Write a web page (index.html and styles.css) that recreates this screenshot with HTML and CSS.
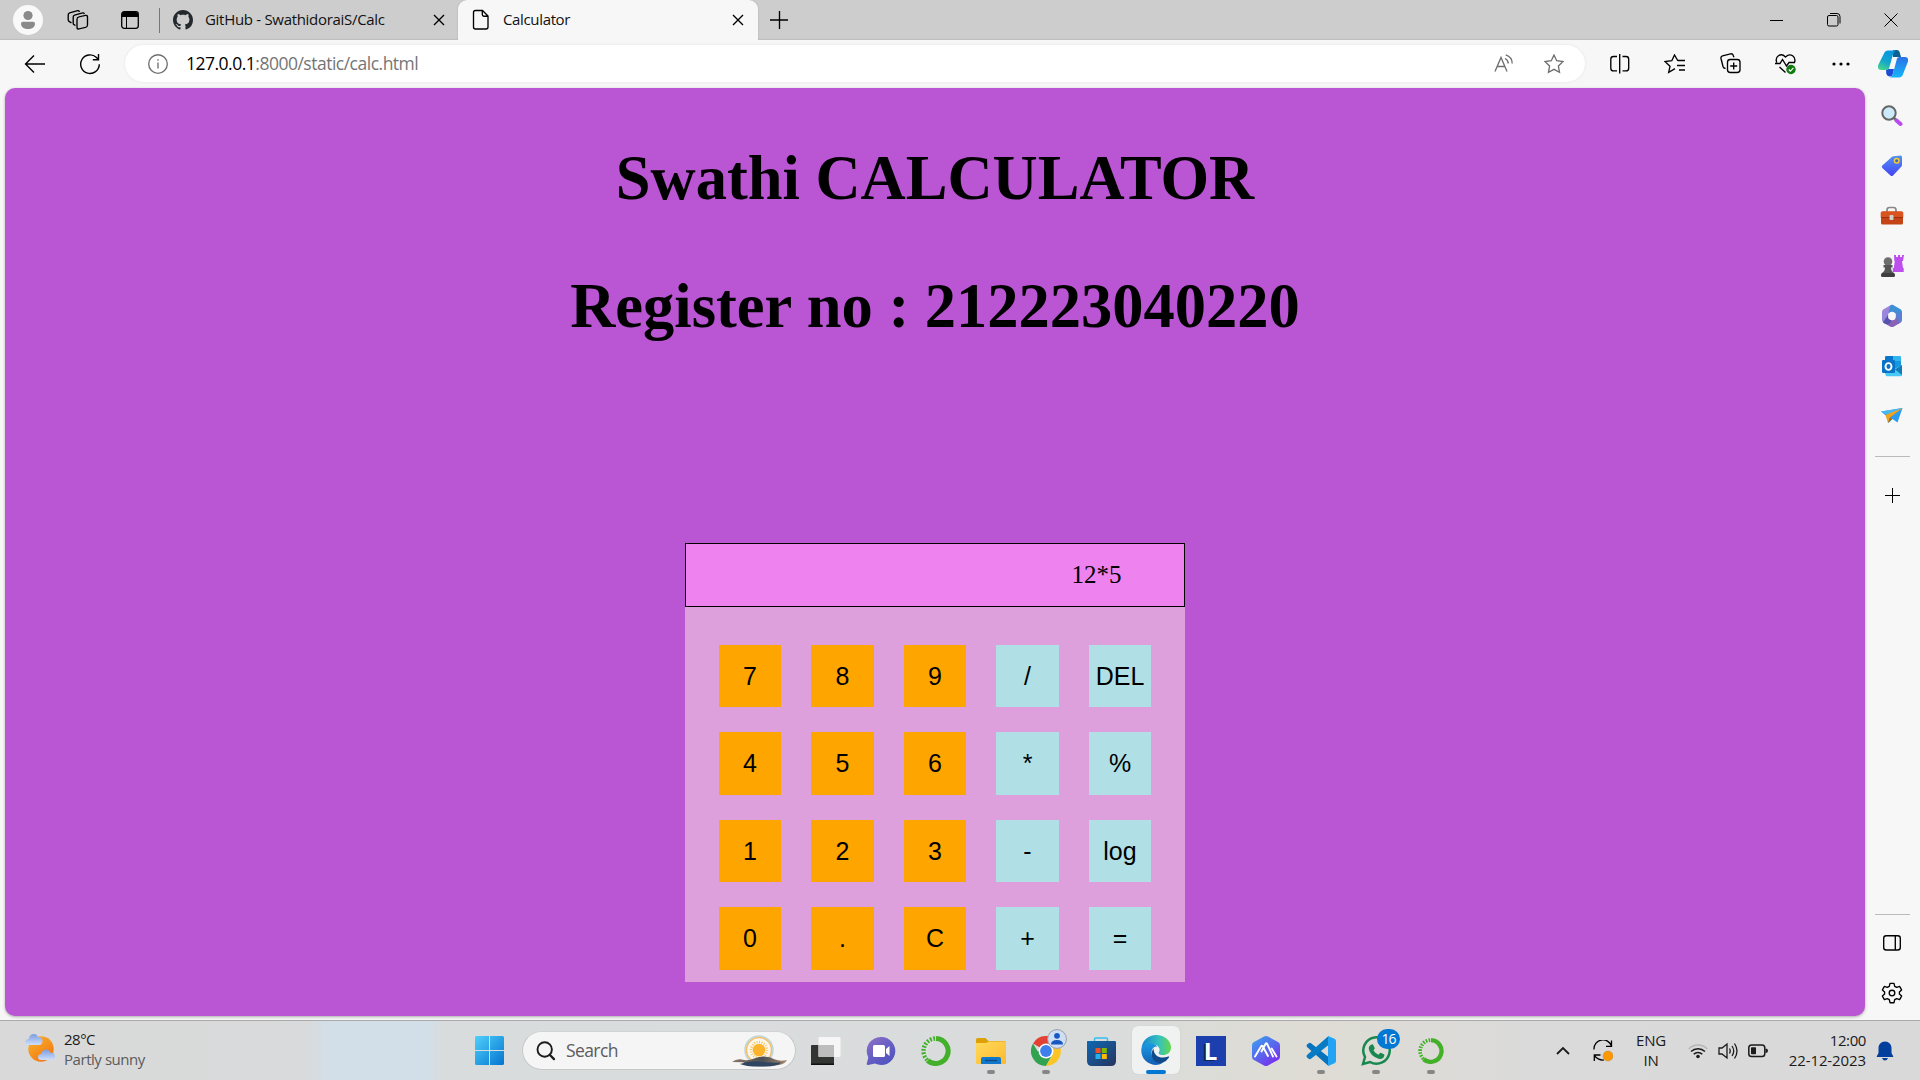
FILE: index.html
```html
<!DOCTYPE html>
<html lang="en">
<head>
<meta charset="utf-8">
<title>Calculator</title>
<link rel="stylesheet" href="styles.css">
</head>
<body>
<header class="tabbar">
  <div class="cell profile"><svg width="30" height="30" viewBox="0 0 30 30"><circle cx="15" cy="15" r="15" fill="#f9f9f9"/><circle cx="15" cy="10.5" r="4.6" fill="#8a8a8a"/><path d="M8 18.5q0-1.7 1.7-1.7h10.6q1.7 0 1.7 1.7c0 3.600-3 5.600-7 5.600s-7-2-7-5.600z" fill="#8a8a8a"/></svg></div>
  <div class="cell w50"><svg class="ln" width="22" height="20" viewBox="0 0 22 20"><rect x="10" y="6.500" width="10.500" height="12" rx="2" transform="matrix(1 -.22 0 1 0 3)"/><path d="M8.500 15.500l-1.500-.8q-.8-.5-.8-1.500V7q0-1.500 1.400-1.900l8-2.200q1.500-.3 1.700 1.300M4.500 12.800l-2.500-1.500q-.8-.5-.8-1.500V4.800q0-1.500 1.400-1.900l8-2.200q1.500-.3 1.700 1.300"/></svg></div>
  <div class="cell tabmenu"><svg width="18" height="18" viewBox="0 0 18 18"><rect x=".7" y=".7" width="16.600" height="16.600" rx="2.500" fill="none" stroke="#000" stroke-width="1.300"/><path d="M1 6V3q0-2 2-2h12q2 0 2 2v3z"/><path d="M5.500 6v11" stroke="#000"/></svg></div>
  <span class="tabrule"></span>
  <div class="tab idle">
    <svg width="20" height="20" viewBox="0 0 16 16" fill="#24292f"><path d="M8 0C3.580 0 0 3.580 0 8c0 3.540 2.290 6.530 5.470 7.590.4.070.55-.17.55-.38 0-.19-.01-.82-.01-1.490-2.010.37-2.530-.49-2.690-.94-.09-.23-.48-.94-.82-1.130-.28-.15-.68-.52-.01-.53.63-.01 1.080.58 1.230.82.72 1.210 1.870.87 2.330.66.070-.52.28-.87.51-1.070-1.780-.2-3.640-.89-3.640-3.950 0-.87.31-1.590.82-2.150-.08-.2-.36-1.020.08-2.120 0 0 .67-.21 2.200.82.64-.18 1.320-.27 2-.27s1.360.09 2 .27c1.530-1.040 2.200-.82 2.200-.82.44 1.100.16 1.920.08 2.120.51.56.82 1.270.82 2.150 0 3.070-1.870 3.750-3.650 3.950.29.25.54.73.54 1.480 0 1.070-.01 1.930-.01 2.200 0 .21.15.46.55.38A8.010 8.010 0 0 0 16 8c0-4.420-3.580-8-8-8z"/></svg>
    <span class="tabname">GitHub - SwathidoraiS/Calc</span>
    <svg class="ln" width="12" height="12" viewBox="0 0 12 12"><path d="M1 1l10 10M11 1L1 11"/></svg>
  </div>
  <div class="tab active">
    <svg class="ln" width="18" height="22" viewBox="0 0 18 22"><path d="M3.500 1.500h7l5.500 5.500v11q0 2-2 2H3.500q-2 0-2-2v-14.500q0-2 2-2zM10.300 1.500V5.500q0 1.700 1.700 1.700h4"/></svg>
    <span class="tabname calc">Calculator</span>
    <svg class="ln" width="12" height="12" viewBox="0 0 12 12"><path d="M1 1l10 10M11 1L1 11"/></svg>
  </div>
  <div class="cell newtab"><svg class="ln" width="18" height="18" viewBox="0 0 18 18"><path d="M0 9h18M9.500 0v18"/></svg></div>
  <div class="winbtns">
    <div class="cell w57"><svg class="ln thin" width="14" height="14" viewBox="0 0 14 14"><path d="M0 7.500h13"/></svg></div>
    <div class="cell w57"><svg class="ln thin" width="14" height="14" viewBox="0 0 14 14"><rect x=".5" y="2.500" width="10.500" height="10.500" rx="1.500"/><path d="M3 .5h7q3 0 3 3v7"/></svg></div>
    <div class="cell w57"><svg class="ln thin" width="14" height="14" viewBox="0 0 14 14"><path d="M.5.500l13 13M13.500.500l-13 13"/></svg></div>
  </div>
</header>

<nav class="toolbar">
  <div class="cell back"><svg class="ln" width="22" height="20" viewBox="0 0 22 20"><path d="M10 1.500L1.500 10l8.500 8.500M1.500 10H21"/></svg></div>
  <div class="cell reload"><svg class="ln" width="22" height="22" viewBox="0 0 22 22"><path d="M20.300 11.300A9.300 9.300 0 1 1 17.500 4.500L19.300 6.500M19.500 1v5.700h-5.700" stroke-width="1.400"/></svg></div>
  <div class="address">
    <svg class="ln gray" width="20" height="20" viewBox="0 0 20 20"><circle cx="10" cy="10" r="9.300"/><path d="M10 8.500v6M10 5.300v1.500"/></svg>
    <span class="url"><b>127.0.0.1</b>:8000/static/calc.html</span>
    <svg class="ln gray aloud" width="20" height="19" viewBox="0 0 20 19"><path d="M1 17.500L7 3.500l6 14M3.300 12.500h7.500M11 4.500q3.200 1.500 3.200 5M11.700.900q6.500 2.200 6.500 8.500"/></svg>
    <svg class="ln gray" width="20" height="20" viewBox="0 0 20 20"><path d="M10 1l2.700 5.700 6.300.9-4.600 4.400 1.100 6.300L10 15.300l-5.500 3 1.100-6.300L1 7.600l6.300-.9z"/></svg>
  </div>
  <div class="tools">
    <div class="cell"><svg class="ln" width="20" height="20" viewBox="0 0 20 20"><path d="M7 2.500H3.500Q.8 2.500.8 5.200v9q0 2.700 2.700 2.700H7M12.500 2.500H16q2.700 0 2.700 2.700v9q0 2.700-2.700 2.700h-3.500M9.700 0v19.500"/></svg></div>
    <div class="cell"><svg class="ln" width="21" height="20" viewBox="0 0 21 20"><path d="M14 7L10.500 1 7.800 6.700l-6.800.9L6 12.300l-1.300 6L11 14.700M14 6.500h7M13 11.500h8M15 16h6"/></svg></div>
    <div class="cell"><svg class="ln" width="21" height="21" viewBox="0 0 21 21"><rect x="7.500" y="6.500" width="12.500" height="13" rx="2.800"/><path d="M13.700 9.500v7M10.200 13h7M5.500 15.500q-2-.2-2.500-2L1 5.500Q.6 3.500 2.500 2.800l8-2q2.200-.3 2.800 1.700l.6 1.700"/></svg></div>
    <div class="cell"><svg class="ln" width="22" height="22" viewBox="0 0 22 22"><path d="M1.800 9.500C-.5 4 5.500-1 10.500 4 15.500-1 21.500 4 19.500 9.500M0 10.500h5l2.500-4 4 6.500 2.500-3.500h6M4.500 14l6 5.500"/><circle cx="16" cy="16.500" r="4.700" fill="#107c10" stroke="none"/><path d="M13.800 16.500l1.600 1.700 3-3.300" stroke="#fff" stroke-width="1.100"/></svg></div>
    <div class="cell"><svg width="18" height="6" viewBox="0 0 18 6"><circle cx="2" cy="3" r="1.600"/><circle cx="9" cy="3" r="1.600"/><circle cx="16" cy="3" r="1.600"/></svg></div>
  </div>
  <div class="cell copilot"><svg width="30" height="28" viewBox="0 0 30 28">
    <defs><linearGradient id="c1" x1="0" y1="1" x2=".4" y2="0"><stop offset="0" stop-color="#52dd84"/><stop offset=".5" stop-color="#15a6cc"/><stop offset="1" stop-color="#0797de"/></linearGradient><linearGradient id="c2" x1="0" y1="0" x2="0" y2="1"><stop offset="0" stop-color="#2b70e6"/><stop offset="1" stop-color="#15b6fb"/></linearGradient></defs>
    <path d="M15 0h4q2 0 2.600 2l1.400 5h-8z" fill="#0c6194"/><path d="M8 19h8l-1.500 6q-.6 1.500-2.500 1.500-3 0-3.700-3z" fill="#1c4bd8"/>
    <path d="M6.500 2.500Q7.600.500 10 .500h9q-3 .2-4 4l-4 14q-.6 1.500-2.500 1.500H3q-4 0-2.800-5z" fill="url(#c1)"/>
    <path d="M24.500 25.500q-1.100 2-3.500 2H11q3-.2 4-4l4-15q.6-1.500 2.500-1.500H27q4 0 2.800 5z" fill="url(#c2)"/></svg></div>
</nav>

<div class="middle">
  <main class="page">
    <h1>Swathi CALCULATOR</h1>
    <h1>Register no : 212223040220</h1>
    <section class="calculator">
      <div class="display">12*5</div>
      <div class="keys">
        <button>7</button><button>8</button><button>9</button><button class="op">/</button><button class="op">DEL</button>
        <button>4</button><button>5</button><button>6</button><button class="op">*</button><button class="op">%</button>
        <button>1</button><button>2</button><button>3</button><button class="op">-</button><button class="op">log</button>
        <button>0</button><button>.</button><button>C</button><button class="op">+</button><button class="op">=</button>
      </div>
    </section>
  </main>
  <aside class="sidebar">
    <div class="item"><svg width="22" height="22" viewBox="0 0 22 22"><path d="M13 13l2 2" stroke="#666" stroke-width="2.500"/><path d="M15.500 15.500l4 3.500" stroke="#b94af0" stroke-width="4" stroke-linecap="round"/><circle cx="8" cy="8" r="6.700" fill="#cdeafa" stroke="#666" stroke-width="2"/></svg></div>
    <div class="item"><svg width="22" height="22" viewBox="0 0 22 22"><defs><linearGradient id="tg" x1="0" y1="0" x2="0" y2="1"><stop offset="0" stop-color="#4f94f4"/><stop offset="1" stop-color="#4742f5"/></linearGradient></defs><path d="M12.500 1.300l7-.8q1.500 0 1.500 1.500v8q0 1-1 2l-8 8.500q-1.200 1-2.500 0L1.300 13q-1-1.300 0-2.500l9.500-8.500q.8-.7 1.700-.7z" fill="url(#tg)"/><circle cx="15.700" cy="5.700" r="2.300" fill="#3469cf" stroke="#fbc934" stroke-width="1.500"/></svg></div>
    <div class="item"><svg width="24" height="20" viewBox="0 0 24 20"><path d="M7 6V4q0-2.500 2.500-2.500h4Q16 1.500 16 4v2" fill="none" stroke="#878787" stroke-width="1.700"/><rect x="1" y="5.500" width="22" height="13" rx="1.500" fill="#c44417"/><path d="M.7 7q0-1.500 1.500-1.500h19.600q1.500 0 1.500 1.500v4.500H.7z" fill="#d9541e"/><path d="M1 11.500h22" stroke="#98310e"/><rect x="9.500" y="9" width="4" height="5" rx="1" fill="#d0d0d0"/></svg></div>
    <div class="item"><svg width="24" height="24" viewBox="0 0 24 24"><path d="M14 1h2v2h2V1h2v2h2V1h2l-1 6h-1l1 7h.7v4H12.800v-4h1l1-7h-.5z" fill="#bd50ed"/><circle cx="8" cy="7.500" r="4.300" fill="#6d6d6d"/><path d="M3.500 11h9v2.500H11q0 3.500 3 5.500v2H2v-2q3-2 3-5.500H3.500z" fill="#555"/><rect x="1" y="19" width="14" height="4" rx="1.500" fill="#3f3f3f"/></svg></div>
    <div class="item"><svg width="22" height="24" viewBox="0 0 22 24"><path d="M10 1L2.500 5.300Q1 6.200 1 8v8q0 1.500 1.200 2.400L7.500 14V9.500L15 4l-3-3q-1-.5-2 0z" fill="#9a86dc"/><path d="M7.500 9.500L9 2q2-2 4-.5l6.500 3.800Q21 6.200 21 8v4l-6.500-2.500L11 7.500z" fill="#3f8fd6"/><path d="M21 8v8q0 1.800-1.500 2.700L17 20l-3-5.500.5-5z" fill="#5a7fd4"/><path d="M7.500 14.500l3.500 2 5-2 2.500 4.800L13 22.500q-2 1-4 0l-6.500-3.800-.6-.6z" fill="#8961b7"/><path d="M2 18.200l5.500-8v4.500l3 2L8 20q-3.500 1-6-1.800z" fill="#5552ad"/><circle cx="11" cy="12" r="3.900" fill="#f7f7f7"/></svg></div>
    <div class="item"><svg width="22" height="22" viewBox="0 0 22 22"><rect x="4" y="1" width="16" height="18" rx="1.300" fill="#32b5ec"/><path d="M4 2.500Q4 1 5.500 1H12v5H4z" fill="#0877c9"/><path d="M12 6h8v6l-5 4-3-2z" fill="#1698dc"/><path d="M5 14l7 .5L21 10v10q0 1.300-1.300 1.300H6q-1.500 0-1.500-1.500z" fill="#47c9f4"/><path d="M14 14.500l7 5.500V10z" fill="#147bb9"/><rect x="1" y="5" width="13" height="13" rx="1.300" fill="#0872c9"/><ellipse cx="7.500" cy="11.500" rx="3" ry="3.400" fill="none" stroke="#fff" stroke-width="1.900"/></svg></div>
    <div class="item"><svg width="22" height="18" viewBox="0 0 22 18"><path d="M0 4.500L21.500 1l-5 14.500-5-3.500-4 4-2-7z" fill="#299cf0"/><path d="M0 4.500L21.500 1 8 9z" fill="#45b9f4"/><path d="M4.500 8L21.500 1 9 10.500 7 16z" fill="#f2a21b"/><path d="M9 10.500L7 16l4-4z" fill="#a8660b"/></svg></div>
    <span class="rule"></span>
    <div class="item add"><svg class="ln thin" width="15" height="15" viewBox="0 0 15 15"><path d="M0 7.500h15M7.500 0v15"/></svg></div>
    <div class="lower">
      <span class="rule"></span>
      <div class="item panel"><svg class="ln" width="18" height="16" viewBox="0 0 18 16"><rect x=".7" y=".7" width="16.600" height="14.300" rx="2.500"/><path d="M12.300.700v14.300"/></svg></div>
      <div class="item gear"><svg class="ln" width="22" height="22" viewBox="0 0 22 22"><circle cx="11" cy="11" r="2.800"/><path d="M9 1.300h4l.7 3 2 1.100 2.900-1 2 3.500-2.200 2.100v2l2.200 2.100-2 3.500-2.900-1-2 1.100-.7 3H9l-.7-3-2-1.100-2.900 1-2-3.500L3.600 12v-2L1.400 7.900l2-3.500 2.900 1 2-1.100z" stroke-linejoin="round"/></svg></div>
    </div>
  </aside>
</div>

<footer class="taskbar">
  <div class="weather">
    <svg width="32" height="30" viewBox="0 0 32 30"><defs><linearGradient id="sun" x1="0" y1="0" x2=".7" y2="1"><stop offset="0" stop-color="#f8b62c"/><stop offset="1" stop-color="#f37612"/></linearGradient><linearGradient id="cl" x1="0" y1="0" x2="0" y2="1"><stop offset="0" stop-color="#7a9ce0"/><stop offset="1" stop-color="#cfdffb"/></linearGradient></defs><circle cx="16" cy="16" r="12.700" fill="url(#sun)"/><path d="M3.500 12q-3 0-3-3t3.200-3Q4.700 1 9 1q3 0 4 3 4-.3 4.500 3.500 0 4.500-3.500 4.500z" fill="url(#cl)"/><path d="M16 27q-3 0-3-3t3.200-3q1-4.500 5-4.500 3 0 4 3 4.500 0 4.800 3.700 0 3.800-3.500 3.800z" fill="url(#cl)"/></svg>
    <div class="wtext"><span class="temp">28°C</span><span class="cond">Partly sunny</span></div>
  </div>
  <div class="start"><svg width="30" height="30" viewBox="0 0 30 30"><defs><linearGradient id="win" gradientUnits="userSpaceOnUse" x1="0" y1="0" x2="29" y2="29"><stop offset="0" stop-color="#4fd0fb"/><stop offset="1" stop-color="#0474d0"/></linearGradient></defs><path d="M1.500 0H14v14H0V1.500Q0 0 1.500 0zM15 0h12.500Q29 0 29 1.500V14H15zM0 15h14v14H1.500Q0 29 0 27.500zM15 15h14v12.500q0 1.500-1.500 1.500H15z" fill="url(#win)"/></svg></div>
  <div class="search">
    <svg width="20" height="20" viewBox="0 0 20 20" fill="none" stroke="#1d1d1d"><circle cx="8.700" cy="8.500" r="7.200" stroke-width="1.900"/><path d="M13.700 13.800l4.300 4.300" stroke-width="2.300" stroke-linecap="round"/></svg>
    <span>Search</span>
    <svg width="56" height="34" viewBox="0 0 56 34"><defs><linearGradient id="hill" x1="0" y1="0" x2="1" y2="0"><stop offset="0" stop-color="#8f7565"/><stop offset=".55" stop-color="#4b5056"/><stop offset="1" stop-color="#a88a6c"/></linearGradient></defs><circle cx="27" cy="16" r="14" fill="#f7f4ed" stroke="#bad8de" stroke-width="1.500"/><circle cx="27" cy="16" r="12.500" fill="#faf7ef" stroke="#f4bd69" stroke-width="1.500"/><circle cx="27" cy="16" r="8" fill="none" stroke="#f6c45c" stroke-width="2.500" stroke-dasharray="1 1.500"/><circle cx="27" cy="16" r="6.300" fill="#fdb42d"/><path d="M0 28q5-4 12-2 5 1 10-1.500 5-2 10-2 6 0 11 3 5 2 12 .5-2 4-8 5-8 1.500-20 1.200-12-.2-16-4z" fill="url(#hill)"/><path d="M8 30q12-4 22-2 10 1 19 .5-3 3.700-16 4-19 .5-25-2.500z" fill="#304560"/></svg>
  </div>
  <div class="apps">
    <div class="app"><svg width="30" height="30" viewBox="0 0 30 30"><rect x="0" y="9" width="23" height="20" rx="1" fill="#333532"/><path d="M0 27.500h23v1q0 .5-.5.500H.5q-.5 0-.5-.5z" fill="#101010"/><rect x="7.500" y="1" width="22" height="20" rx="1" fill="#f6f6f6"/><rect x="7.500" y="9" width="15.500" height="12" fill="#bdbdbd"/></svg></div>
    <div class="app"><svg width="30" height="30" viewBox="0 0 30 30"><defs><linearGradient id="chat" x1="0" y1="0" x2=".7" y2="1"><stop offset="0" stop-color="#9272c2"/><stop offset=".5" stop-color="#6b60c5"/><stop offset="1" stop-color="#4f54be"/></linearGradient></defs><path d="M15 1a14 14 0 1 1-6 26.500L2 29Q.5 29.300.8 27.500l1.500-6A14 14 0 0 1 15 1z" fill="url(#chat)"/><rect x="7" y="9" width="12" height="12" rx="1.500" fill="#fff"/><path d="M20 13l3.500-3v10L20 17z" fill="#fff"/></svg></div>
    <div class="app"><svg width="30" height="30" viewBox="0 0 30 30" fill="none" stroke="#43b02a"><path d="M15 2.500a12.500 12.500 0 1 1-8.500 22" stroke-width="5"/><path d="M14 2.500A12.500 12.500 0 0 0 7 24.500" stroke-width="4.500" stroke-dasharray="1.800 1.500"/><path d="M12 6A10 10 0 0 0 8 22" stroke-width="1.500" stroke-dasharray="2 1" stroke="#dfe5de"/></svg></div>
    <div class="app run"><svg width="30" height="30" viewBox="0 0 30 30"><defs><linearGradient id="fd" x1="0" y1="0" x2="1" y2="1"><stop offset="0" stop-color="#ffd95a"/><stop offset="1" stop-color="#fcba30"/></linearGradient></defs><path d="M0 3.500Q0 2 1.500 2h8l3 3H28q2 0 2 2v3H0z" fill="#dda007"/><path d="M0 7h10l3-1.500h15.500Q30 5.500 30 7v20q0 1-1 1H1q-1 0-1-1z" fill="url(#fd)"/><path d="M5 28v-5q0-2 2-2h16q2 0 2 2v5z" fill="#1177cb"/><path d="M9 24.500h12" stroke="#0a4a86" stroke-width="1.400"/></svg></div>
    <div class="app run"><svg width="30" height="30" viewBox="0 0 30 30"><path d="M15 15L2 7.500A15 15 0 0 1 28 7.500z" fill="#e34133"/><path d="M15 15H6.500L2 7.500A15 15 0 0 0 15 30l6-11z" fill="#31a350"/><path d="M15 8h13.200A15 15 0 0 1 15 30l6.500-11z" fill="#fcc525"/><circle cx="15" cy="15" r="7.500" fill="#fff"/><circle cx="15" cy="15" r="5.900" fill="#3d80ec"/></svg><svg class="badge person" width="20" height="20" viewBox="0 0 20 20"><circle cx="10" cy="10" r="9.400" fill="#cfdef7" stroke="#9a9da2"/><circle cx="10" cy="6.800" r="2.900" fill="#1757c0"/><path d="M4 15.500q0-4.500 6-4.500t6 4.500z" fill="#1757c0"/></svg></div>
    <div class="app"><svg width="30" height="30" viewBox="0 0 30 30"><defs><linearGradient id="st" x1="0" y1="0" x2="1" y2="1"><stop offset="0" stop-color="#0e68b4"/><stop offset="1" stop-color="#27355d"/></linearGradient></defs><path d="M8.500 7V3Q8.500 2 9.500 2h11q1 0 1 1v4" fill="none" stroke="#32bff1" stroke-width="1.500"/><path d="M1.500 5h27Q30 5 30 6v19q0 5-5 5H6q-5 0-5-5V6q0-1 .5-1z" fill="url(#st)"/><path d="M9.500 12h5v5h-5z" fill="#f25022"/><path d="M15.800 12h5v5h-5z" fill="#7fba00"/><path d="M9.500 18h5v5h-5z" fill="#28afea"/><path d="M15.800 18h5v5h-5z" fill="#ffb900"/></svg></div>
    <div class="app run current"><svg width="30" height="30" viewBox="0 0 30 30"><defs><linearGradient id="e1" x1="0" y1=".5" x2="1" y2=".5"><stop offset="0" stop-color="#1683d3"/><stop offset=".6" stop-color="#36c2bd"/><stop offset="1" stop-color="#65d84b"/></linearGradient><linearGradient id="e2" x1="0" y1="0" x2="0" y2="1"><stop offset="0" stop-color="#1a99e3"/><stop offset="1" stop-color="#115fb4"/></linearGradient></defs><path d="M.5 13C1.500 5 8 0 15 0c9 0 15 6 15 12.500 0 5-4 7.500-8 7.500-4 0-5-1.500-4-3 2-3-1-7.500-6-7.500C6 9.500 2 11 .5 13z" fill="url(#e1)"/><path d="M.5 13c1.500-3 5.500-5 10-4.500 3 .3 5 2 5.500 3.500-3-1-5.500 2-5.500 6 0 6 5.500 10.500 11 10-2 1.300-4.500 2-7 2C5.500 29.500-1 22 .5 13z" fill="url(#e2)"/><path d="M12.500 13.500C8 20 12 29.500 21 28q4.500-1.500 7-5.500.6-1.300-.8-1C21 24 13 22.500 12.500 13.500z" fill="#114a8b"/></svg></div>
    <div class="app"><div class="lapp">L</div></div>
    <div class="app"><svg width="30" height="30" viewBox="0 0 30 30"><defs><linearGradient id="hex" x1="0" y1="0" x2=".7" y2="1"><stop offset="0" stop-color="#38a6f1"/><stop offset=".6" stop-color="#5b62ec"/><stop offset="1" stop-color="#7a2ef0"/></linearGradient></defs><path d="M13 .600q2-1.200 4 0l10 5.500q2 1 2 3.400v11q0 2.400-2 3.400l-10 5.500q-2 1.200-4 0L3 23.900q-2-1-2-3.400v-11q0-2.400 2-3.400z" fill="url(#hex)"/><path d="M4 20.500l6-10q1-1.500 1.800 0L17 20M10.500 15.500L14.500 8q.8-1.500 1.700 0L22 20.500M20.700 12.500l4.800 8" fill="none" stroke="#fff" stroke-width="1.900" stroke-linecap="round"/></svg></div>
    <div class="app run"><svg width="30" height="30" viewBox="0 0 30 30"><path d="M1 8.500l2-1.500q1-.6 2 .2L22.500 21v9L1 11q-1-1.200 0-2.500z" fill="#0873bd"/><path d="M1 21.500L3 23q1 .6 2-.2L22.500 9V0L1 19q-1 1.200 0 2.500z" fill="#087bc5"/><path d="M22 0l6.500 2.800Q30 3.500 30 5v20q0 1.500-1.500 2.200L22 30z" fill="#22a3f3"/></svg></div>
    <div class="app run"><svg width="30" height="30" viewBox="0 0 30 30"><path d="M2 28l2-7A13.200 13.200 0 1 1 9 26z" fill="none" stroke="#18884f" stroke-width="2.500"/><path d="M10.500 8.500q1.200-.8 1.800.4l1.400 3q.3.700-1.300 2.300 2 3.500 5.200 4.500 1.500-2.200 2.200-1.900l3 1.500q.8.400.5 1.500-1 3.500-5 3.200-9-2.500-10.500-10Q7.500 10 10.500 8.500z" fill="#18884f"/></svg><span class="badge count">16</span></div>
    <div class="app run"><svg width="26" height="26" viewBox="0 0 30 30" fill="none" stroke="#43b02a"><path d="M15 2.500a12.500 12.500 0 1 1-8.500 22" stroke-width="5"/><path d="M14 2.500A12.500 12.500 0 0 0 7 24.500" stroke-width="4.500" stroke-dasharray="1.800 1.500"/><path d="M12 6A10 10 0 0 0 8 22" stroke-width="1.500" stroke-dasharray="2 1" stroke="#e2e3dd"/></svg></div>
  </div>
  <div class="tray">
    <div class="cell chev"><svg width="14" height="10" viewBox="0 0 14 10" fill="none" stroke="#1b1b1b" stroke-width="1.800"><path d="M1 8l6-6 6 6"/></svg></div>
    <div class="cell sync"><svg class="ln" width="20" height="22" viewBox="0 0 20 22"><path d="M1 9.500A9 9 0 0 1 18.500 6M18.500.500V6.300h-5.500M7.500 15H1.300V21M1.300 15.500q4 5 9.500 4.500" stroke-width="1.300"/><circle cx="15" cy="16" r="5" fill="#ff9800" stroke="#b8893f" stroke-width=".5"/></svg></div>
    <div class="lang"><span>ENG</span><span>IN</span></div>
    <div class="cell w30"><svg width="20" height="16" viewBox="0 0 20 16" fill="none" stroke="#1b1b1b" stroke-width="1.500"><path d="M.7 6A13 13 0 0 1 19.300 6" stroke="#b5b7b7"/><path d="M3 8.500a10 10 0 0 1 14 0M5.700 11.200a6.200 6.200 0 0 1 8.600 0"/><circle cx="10" cy="13.500" r="1.800" fill="#1b1b1b" stroke="none"/></svg></div>
    <div class="cell w30"><svg width="20" height="18" viewBox="0 0 20 18" fill="none" stroke="#1b1b1b" stroke-width="1.300"><path d="M1 6h3l5-4v14l-5-4H1zM11.500 6.500q1.500 2.500 0 5M14 4q3.500 5 0 10M16.500 1.500q5 7.500 0 15"/></svg></div>
    <div class="cell w30"><svg width="20" height="14" viewBox="0 0 20 14"><rect x=".8" y="1" width="16" height="11.500" rx="2.800" fill="none" stroke="#1b1b1b" stroke-width="1.500"/><rect x="3" y="3.200" width="5" height="7" rx=".8" fill="#1b1b1b"/><path d="M17.500 4.500q2.500 0 2.500 2.200t-2.500 2.300z" fill="#1b1b1b"/></svg></div>
    <div class="clock"><span class="time">12:00</span><span class="date">22-12-2023</span></div>
    <svg class="bell" width="18" height="20" viewBox="0 0 18 20"><path d="M9 .500c4 0 6.500 3 6.500 6.500v5l1.800 3.500q0 .5-.5.500H1.200q-.5 0-.5-.5L2.500 12V7C2.500 3.500 5 .500 9 .500zM6 17h6q-1 2.500-3 2.500T6 17z" fill="#023f9c"/></svg>
  </div>
</footer>
</body>
</html>
```

FILE: styles.css
```css
* { box-sizing: border-box; }
body {
  margin: 0;
  width: 1920px;
  height: 1080px;
  overflow: hidden;
  display: flex;
  flex-direction: column;
  background: #f7f7f7;
  font-family: "Open Sans", "Noto Sans", sans-serif;
  color: #1b1b1b;
}
svg { display: block; flex: none; }
.ln { fill: none; stroke: #000; stroke-width: 1.35; }
.ln.thin { stroke-width: 1; }
.ln.gray { stroke: #6f6f6f; }
.cell { display: flex; align-items: center; justify-content: center; flex: none; }
.w30 { width: 30px; }
.w50 { width: 50px; }
.w57 { width: 57px; }

/* Tab strip */
.tabbar { flex: none; height: 40px; display: flex; align-items: center; background: #cdcdcd; box-shadow: inset 0 -2px 1px -1px #bdbdbd; }
.profile { width: 50px; padding-left: 6px; }
.tabbar .w50 { width: 55px; }
.tabmenu { width: 49px; }
.tabrule { width: 1px; height: 25px; margin-left: 5px; background: #777; }
.tab { flex: none; height: 40px; display: flex; align-items: center; }
.tab svg:last-child { margin-left: auto; }
.idle { width: 298px; padding: 0 13px 0 13px; }
.tabname { margin-left: 12px; padding-bottom: 2px; font-size: 15px; letter-spacing: -.3px; white-space: nowrap; color: #111; }
.tabname.calc { margin-left: 13px; letter-spacing: -.35px; }
.active { width: 300px; padding: 0 14px; background: #f7f7f7; border-radius: 9px 9px 0 0; box-shadow: 0 0 2px #aaa; clip-path: inset(0 -3px 0 -3px); }
.newtab { width: 42px; }
.winbtns { display: flex; margin-left: auto; padding-right: 1px; padding-bottom: 1px; }

/* Address row */
.toolbar { flex: none; height: 48px; display: flex; align-items: center; padding-bottom: 1px; }
.back { width: 70px; }
.reload { width: 40px; }
.address { width: 1460px; height: 37px; margin-left: 15px; padding: 0 21px 0 22.5px; display: flex; align-items: center; background: #fff; border-radius: 19px; box-shadow: 0 0 3px #e3e3e3; }
.url { margin-left: 18.500px; padding-bottom: 2px; font-size: 17.5px; letter-spacing: -.5px; color: #757575; white-space: nowrap; }
.url b { font-weight: 400; color: #000; }
.aloud { margin: 0 30px 0 auto; }
.tools { display: flex; margin-left: 7px; }
.tools .cell { width: 55.3px; }
.copilot { width: 50px; }

/* Web page and side panel */
.middle { flex: none; height: 933px; display: flex; border-bottom: 1px solid #aaa; }
.page { width: 1860px; height: 928px; margin-left: 5px; padding-top: 54px; background: #ba55d3; border-radius: 10px; box-shadow: 0 1px 3px #aaa; display: flex; flex-direction: column; align-items: center; }
h1 { margin: 0 0 56px; font: bold 62.5px/72px "Liberation Serif", serif; color: #000; white-space: nowrap; }
.calculator { width: 500px; height: 439px; margin-top: 145px; background: #dda0dd; }
.display { height: 64px; padding: 0 62.5px 0 0; border: 1px solid #000; background: #ee82ee; font: 25px/61px "Liberation Serif", serif; text-align: right; color: #000; }
.keys { display: grid; grid-template-columns: repeat(5, 62.5px); grid-auto-rows: 62.5px; gap: 25px 30px; padding: 37.75px 0 0 33.75px; }
button { padding: 0; border: 0; background: #ffa500; font: 25px "Liberation Sans", sans-serif; color: #000; }
.op { background: #b0e0e6; }
.sidebar { width: 54px; display: flex; flex-direction: column; align-items: center; }
.item { width: 54px; height: 50px; flex: none; display: flex; align-items: center; justify-content: center; }
.item:first-child { margin-top: 2.5px; }
.rule { width: 35px; height: 1px; flex: none; margin-top: 15.5px; background: #bbb; }
.item.add { margin-top: 13px; }
.lower { margin-top: auto; display: flex; flex-direction: column; align-items: center; padding-bottom: 2px; }
.lower .rule { margin: 0 0 3px; }

/* Taskbar */
.taskbar { flex: none; height: 59px; display: flex; background: linear-gradient(90deg, #d9d9d9 0, #d9dadb 305px, #d2dfe8 330px, #d2dfe8 425px, #d9dcdd 445px, #dadcdc 1100px, #dedcd4 1310px, #dadada 1530px, #d9d9d9 100%); }
.weather { width: 475px; display: flex; align-items: flex-start; padding: 12px 0 0 25px; }
.wtext { display: flex; flex-direction: column; margin: -4px 0 0 7px; font-size: 15px; line-height: 20px; }
.temp { letter-spacing: -.5px; }
.cond { color: #5b5b5b; letter-spacing: -.45px; }
.start { width: 46.5px; padding-top: 15px; }
.search { width: 274px; height: 39px; margin-top: 10px; padding: 0 7px 0 13px; display: flex; align-items: center; border-radius: 20px; background: #f5f5f5; border: 1px solid #c6c8c8; border-top-color: #d2d4d4; }
.search span { margin: 0 auto 2px 10.500px; font-size: 17.5px; letter-spacing: -.6px; color: #5c5c5c; }
.apps { display: flex; margin-left: 2.500px; }
.app { position: relative; width: 55px; height: 59px; display: flex; align-items: center; justify-content: center; }
.run::after { content: ""; position: absolute; left: 23.5px; bottom: 6px; width: 8px; height: 4px; border-radius: 2px; background: #868686; }
.current { width: 48px; height: 48px; margin: 5px 3.5px; border-radius: 6px; background: #f0f1f1; box-shadow: 0 0 1px #bbb; }
.current::after { left: 14px; bottom: 0; width: 20px; background: #0078d4; }
.badge { position: absolute; left: 29px; top: 8px; }
.count { width: 23px; height: 20px; border-radius: 10px; background: #0078d4; color: #fff; font-size: 14px; line-height: 20px; text-align: center; letter-spacing: -1px; }
.lapp { width: 30px; height: 30px; background: #1c3fae; color: #fff; font: bold 24px/29px "Open Sans", sans-serif; text-align: center; text-shadow: -2px 1px 0 #10254f; }
.tray { margin-left: auto; display: flex; align-items: center; padding-right: 26px; font-size: 15px; line-height: 20px; }
.lang, .clock { margin-bottom: 2px; }
.chev { width: 40px; }
.sync { width: 40px; }
.lang { width: 56px; margin-right: 4px; display: flex; flex-direction: column; align-items: center; letter-spacing: -.2px; }
.clock { width: 93px; display: flex; flex-direction: column; align-items: flex-end; letter-spacing: -.1px; }
.time { letter-spacing: -.4px; }
.bell { margin-left: 10px; }
```
